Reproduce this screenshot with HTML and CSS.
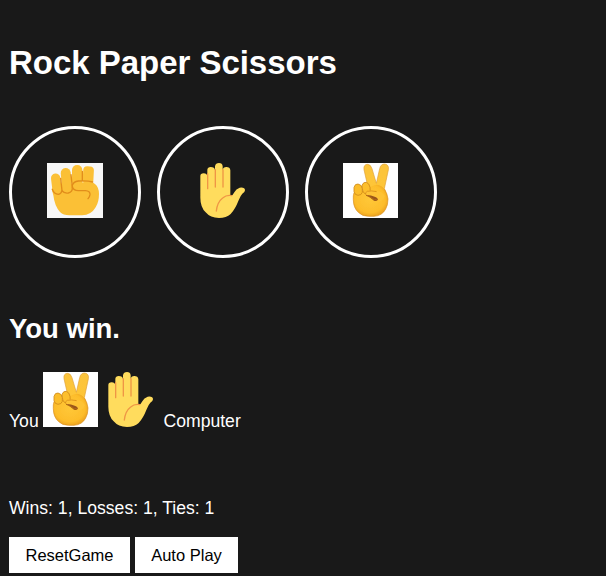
FILE: index.html
```
<!DOCTYPE html>
<html lang="en">
<head>
<meta charset="utf-8">
<title>Rock Paper Scissors</title>
<link rel="stylesheet" href="styles.css">
</head>
<body>
<svg class="defs" aria-hidden="true">
  <defs>
    <linearGradient id="skin" gradientUnits="userSpaceOnUse" x1="0" y1="18" x2="0" y2="175">
      <stop offset="0" stop-color="#fbc43c"/>
      <stop offset="0.6" stop-color="#ffc637"/>
      <stop offset="1" stop-color="#f4a51d"/>
    </linearGradient>
    <radialGradient id="fist" cx="0.48" cy="0.45" r="0.62">
      <stop offset="0" stop-color="#ffc838"/>
      <stop offset="0.7" stop-color="#fdbd2b"/>
      <stop offset="1" stop-color="#e59719"/>
    </radialGradient>
    <filter id="soft" x="-10%" y="-10%" width="120%" height="120%"><feGaussianBlur stdDeviation="0.4"/></filter>
    <symbol id="rock" viewBox="15 15 168 165">
      <rect x="15" y="15" width="168" height="165" fill="#f7f7f7"/>
      <path d="M29 92 L34 112 Q38 145 54 162 Q64 172 82 172 H120 Q148 171 161 148 Q171 132 171 108 Q171 88 159 78 L147 70 L60 82 Z" fill="#fbc036"/>
      <g fill="#fbc036">
        <rect x="123" y="25" width="32" height="52" rx="12" transform="rotate(3 139 50)"/>
        <rect x="90" y="21" width="31" height="68" rx="15"/>
        <rect x="58" y="30" width="30" height="75" rx="15" transform="rotate(-5 74 66)"/>
        <rect x="29" y="46" width="28" height="61" rx="14" transform="rotate(-7 44 77)"/>
      </g>
      <g fill="none" stroke="#e18d1b" stroke-width="4" stroke-linecap="round" stroke-linejoin="round">
        <path d="M31 94 Q36 109 49 109 Q58 107 60 98 Q66 107 79 105 Q92 102 91 88"/>
        <path d="M56 61 L60 98 M87 50 L91 88 M121 40 V68"/>
        <path d="M91 82 Q94 71 109 69 Q135 67 152 72"/>
        <path d="M91 85 Q94 98 109 98 H130 Q145 99 144 110 Q143 117 138 122"/>
      </g>
    </symbol>
    <symbol id="paper" viewBox="15 15 165 165">
      <path d="M31 54 Q31 46 41 46 Q51 46 52 55 V35 Q53 27 62 27 Q74 27 75 36 V25 Q77 15 87 15 Q97 15 98 25 V36 Q99 27 109 27 Q120 27 121 37 V113 Q128 114 133 103 Q138 92 149 89 Q165 87 165 97 Q165 102 157 107 Q151 113 146 127 Q135 155 122 168 Q109 180 87 180 Q61 180 47 163 Q31 147 31 119 Z" fill="#ffdc5d"/>
      <g fill="none" stroke="#ef9645" stroke-width="4" stroke-linecap="round">
        <path d="M53 47 V92 M76 35 V87 M99 35 V87"/>
        <path d="M79 159 Q82 132 98 120 Q110 110 125 113"/>
      </g>
    </symbol>
    <symbol id="scissors" viewBox="15 15 165 165">
      <rect x="15" y="15" width="165" height="165" fill="#fff"/>
      <g filter="url(#soft)">
        <path d="M91 92 L78 35 Q76 20 88 19 Q98 19 102 32 L115 76 L125 32 Q128 18 140 18 Q154 20 151 36 L139 92 L145 112 L92 112 Z" fill="url(#skin)" stroke="#dea03a" stroke-width="2"/>
        <path d="M48 104 Q45 113 46 125 Q46 149 61 163 Q72 175 92 175 H108 Q133 173 143 153 Q150 141 150 123 Q148 107 140 94 Q132 82 116 80 Q96 83 84 97 Z" fill="url(#fist)"/>
        <path d="M48 104 Q45 113 46 125 Q46 149 61 163 Q72 175 92 175 H108 Q133 173 143 153 Q150 141 150 123 Q148 107 140 94" fill="none" stroke="#d98e1c" stroke-width="2"/>
        <path d="M48 88 Q51 77 60 78 Q71 80 73 91 V103 Q70 112 60 112 Q50 111 48 101 Z" fill="#fbbd2c" stroke="#cf8a1b" stroke-width="2.5"/>
        <path d="M72 82 Q76 71 85 73 Q94 76 96 88 L97 104 Q88 110 79 106 Q73 100 73 91 Z" fill="#fdbf2d" stroke="#cf8a1b" stroke-width="2.5"/>
        <path d="M84 110 Q96 118 108 128 Q119 132 121 120 Q116 110 98 109 Z" fill="#99551a"/>
        <path d="M85 111 Q78 103 89 99 Q97 96 112 99 Q134 99 140 115 Q137 128 122 132 Q122 120 110 116 Q100 112 85 111 Z" fill="#fec336"/>
        <path d="M84 111 Q79 104 88 100 Q99 97 116 101" fill="none" stroke="#d88e1b" stroke-width="2.5"/>
        <path d="M84 112 Q94 115 103 121 Q109 128 116 125" fill="none" stroke="#b56d16" stroke-width="3"/>
      </g>
    </symbol>
  </defs>
</svg>
<h1 class="title">Rock Paper Scissors</h1>
<div class="moves">
  <button class="move" aria-label="Rock"><svg class="icon icon-rock"><use href="#rock"/></svg></button>
  <button class="move" aria-label="Paper"><svg class="icon"><use href="#paper"/></svg></button>
  <button class="move" aria-label="Scissors"><svg class="icon"><use href="#scissors"/></svg></button>
</div>
<p class="result">You win.</p>
<p class="picks"><span>You</span><svg class="icon"><use href="#scissors"/></svg><svg class="icon"><use href="#paper"/></svg><span class="computer">Computer</span></p>
<p class="score">Wins: 1, Losses: 1, Ties: 1</p>
<div class="actions">
  <button class="action reset">ResetGame</button>
  <button class="action auto">Auto Play</button>
</div>
</body>
</html>
```
FILE: styles.css
```
* { box-sizing: border-box; }
body {
  margin: 0;
  padding: 44px 9px 0;
  overflow: hidden;
  background: #191919;
  color: #fff;
  font-family: "Liberation Sans", Arial, sans-serif;
  font-size: 17.6px;
}
.defs { position: absolute; width: 0; height: 0; }
.title { margin: 0 0 44px; font-size: 33px; line-height: 38px; letter-spacing: -0.03px; }
.moves { display: flex; gap: 16px; }
.move {
  display: flex;
  align-items: center;
  justify-content: center;
  width: 132px;
  height: 132px;
  padding: 0 1px 3px 0;
  border: 3px solid #fff;
  border-radius: 50%;
  background: transparent;
}
.icon { display: block; width: 55px; height: 55px; flex: none; }
.icon-rock { width: 56px; margin-left: 1px; }
.result { margin: 55px 0 0; font-size: 27.5px; font-weight: bold; line-height: 32px; }
.picks { display: flex; align-items: flex-end; gap: 5px; height: 59px; margin: 27px 0 0; line-height: 20px; }
.picks span:first-child { width: 29px; }
.picks .icon { align-self: flex-start; }
.picks .computer { margin-left: 0.5px; }
.score { margin: 67px 0 0; line-height: 20px; }
.actions { display: flex; gap: 5px; margin-top: 19px; }
.action {
  height: 36px;
  padding: 0;
  border: 0;
  background: #fff;
  color: #000;
  font-family: inherit;
  font-size: 16.5px;
}
.reset { width: 121px; }
.auto { width: 103px; }
```
